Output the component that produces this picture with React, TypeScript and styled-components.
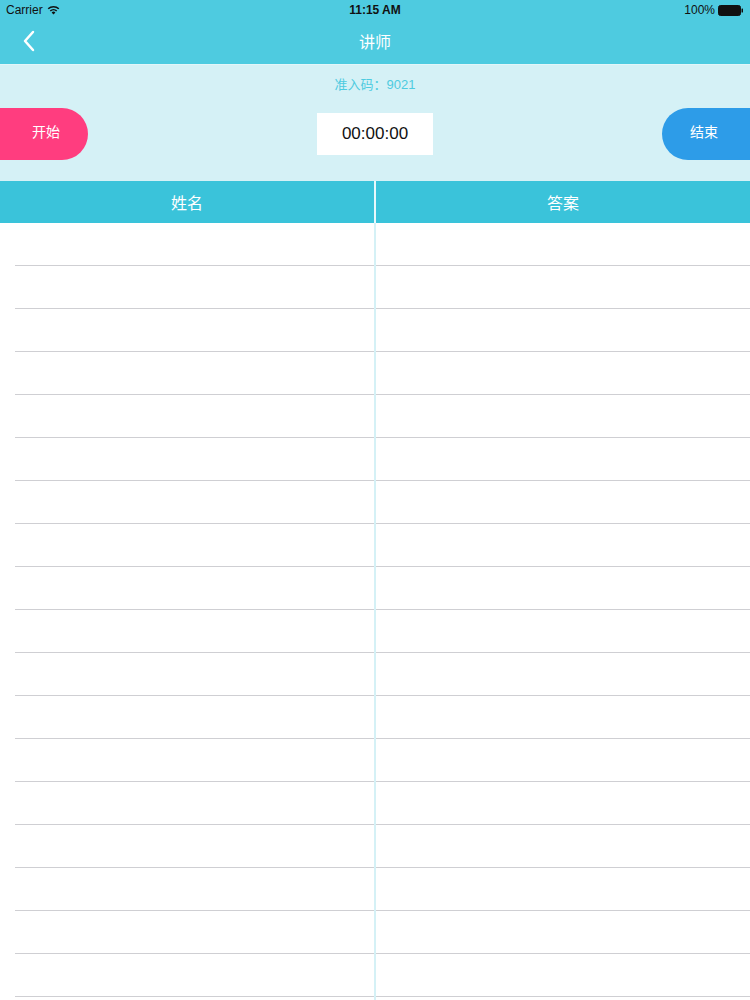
import styled, { createGlobalStyle } from "styled-components";

const GlobalStyle = createGlobalStyle`
  html, body {
    margin: 0;
    padding: 0;
    background: #ffffff;
    overflow: hidden;
  }
  body {
    font-family: "Liberation Sans", "Noto Sans CJK SC", sans-serif;
  }
`;

const Page = styled.div`
  width: 750px;
  height: 1000px;
  display: flex;
  flex-direction: column;
  overflow: hidden;
  background: #ffffff;
`;

const TopBar = styled.header`
  background-color: #4ecbe0;
  height: 64px;
  display: flex;
  flex-direction: column;
`;

const StatusBar = styled.div`
  height: 20px;
  padding: 0 6px;
  display: grid;
  grid-template-columns: 1fr auto 1fr;
  align-items: center;
  font-size: 12px;
  color: #111;
`;

const StatusLeft = styled.div`
  display: flex;
  align-items: center;
  gap: 4px;
`;

const StatusTime = styled.div`
  font-weight: bold;
`;

const StatusRight = styled.div`
  display: flex;
  align-items: center;
  justify-content: flex-end;
  gap: 3px;
`;

const NavBar = styled.div`
  flex: 1;
  display: grid;
  grid-template-columns: 60px 1fr 60px;
  align-items: center;
  padding-bottom: 2px;
`;

const BackButton = styled.button`
  border: none;
  background: none;
  padding: 0 0 0 22px;
  height: 100%;
  display: flex;
  align-items: center;
  cursor: pointer;
`;

const NavTitle = styled.h1`
  margin: 0;
  text-align: center;
  font-size: 16px;
  font-weight: normal;
  color: #ffffff;
`;

const ControlPanel = styled.section`
  background-color: #d5f1f6;
  height: 117px;
  border-top: 1px solid #e2f6f9;
  box-sizing: border-box;
  display: flex;
  flex-direction: column;
`;

const AccessCode = styled.div`
  text-align: center;
  font-size: 13px;
  color: #4ecbe0;
  padding-top: 9px;
  height: 31px;
  box-sizing: border-box;
`;

const ControlRow = styled.div`
  display: flex;
  align-items: center;
  justify-content: space-between;
  height: 52px;
  margin-top: 12px;
`;

const SideButton = styled.button<{ $side: "left" | "right"; $color: string }>`
  width: 88px;
  height: 52px;
  border: none;
  background-color: ${(p) => p.$color};
  color: #ffffff;
  font-size: 14px;
  line-height: 1;
  font-family: inherit;
  border-radius: ${(p) => (p.$side === "left" ? "0 26px 26px 0" : "26px 0 0 26px")};
  padding: ${(p) => (p.$side === "left" ? "0 0 4px 4px" : "0 4px 4px 0")};
  cursor: pointer;
`;

const Timer = styled.div`
  width: 116px;
  height: 42px;
  background: #ffffff;
  display: flex;
  align-items: center;
  justify-content: center;
  font-size: 17px;
  color: #111;
`;

const Table = styled.div`
  flex: 1;
  display: grid;
  grid-template-columns: 374px 2px 374px;
  overflow: hidden;
`;

const HeaderCell = styled.div`
  background-color: #3ac3da;
  height: 42px;
  display: flex;
  align-items: center;
  justify-content: center;
  color: #ffffff;
  font-size: 16px;
`;

const Divider = styled.div<{ $head?: boolean }>`
  background-color: ${(p) => (p.$head ? "#e8f8fb" : "#d5f1f6")};
`;

const Column = styled.div`
  display: flex;
  flex-direction: column;
`;

const Row = styled.div<{ $inset: number }>`
  height: 43px;
  flex-shrink: 0;
  box-sizing: border-box;
  margin-left: ${(p) => p.$inset}px;
  border-bottom: 1px solid #cfcfd3;
`;

const ROWS = Array.from({ length: 19 }, (_, i) => i);

const WifiIcon = () => (
  <svg width="13" height="10" viewBox="0 0 13 10">
    <path d="M6.5 9.5 L4.6 7.4 A2.8 2.8 0 0 1 8.4 7.4 Z" fill="#111" />
    <path d="M3.3 6 A4.6 4.6 0 0 1 9.7 6" stroke="#111" strokeWidth="1.5" fill="none" />
    <path d="M1.2 3.8 A7.6 7.6 0 0 1 11.8 3.8" stroke="#111" strokeWidth="1.5" fill="none" />
  </svg>
);

const BatteryIcon = () => (
  <svg width="26" height="11" viewBox="0 0 26 11">
    <rect x="0.5" y="0.5" width="22" height="10" rx="2" fill="#111" stroke="#111" />
    <rect x="23.5" y="3.5" width="1.5" height="4" rx="0.5" fill="#111" />
  </svg>
);

const ChevronLeft = () => (
  <svg width="14" height="22" viewBox="0 0 14 22">
    <path d="M11 2 L3 11 L11 20" stroke="#ffffff" strokeWidth="2.5" fill="none" strokeLinecap="round" strokeLinejoin="round" />
  </svg>
);

const App = () => {
  return (
    <>
      <GlobalStyle />
      <Page>
        <TopBar>
          <StatusBar>
            <StatusLeft>
              Carrier <WifiIcon />
            </StatusLeft>
            <StatusTime>11:15 AM</StatusTime>
            <StatusRight>
              100% <BatteryIcon />
            </StatusRight>
          </StatusBar>
          <NavBar>
            <BackButton aria-label="返回">
              <ChevronLeft />
            </BackButton>
            <NavTitle>讲师</NavTitle>
            <span />
          </NavBar>
        </TopBar>

        <ControlPanel>
          <AccessCode>准入码：9021</AccessCode>
          <ControlRow>
            <SideButton $side="left" $color="#ff3d7f">开始</SideButton>
            <Timer>00:00:00</Timer>
            <SideButton $side="right" $color="#2d9ce8">结束</SideButton>
          </ControlRow>
        </ControlPanel>

        <Table>
          <Column>
            <HeaderCell>姓名</HeaderCell>
            {ROWS.map((i) => (
              <Row key={i} $inset={15} />
            ))}
          </Column>
          <Column>
            <Divider $head style={{ height: 42, flexShrink: 0 }} />
            <Divider style={{ flex: 1 }} />
          </Column>
          <Column>
            <HeaderCell>答案</HeaderCell>
            {ROWS.map((i) => (
              <Row key={i} $inset={0} />
            ))}
          </Column>
        </Table>
      </Page>
    </>
  );
};

export default App;
